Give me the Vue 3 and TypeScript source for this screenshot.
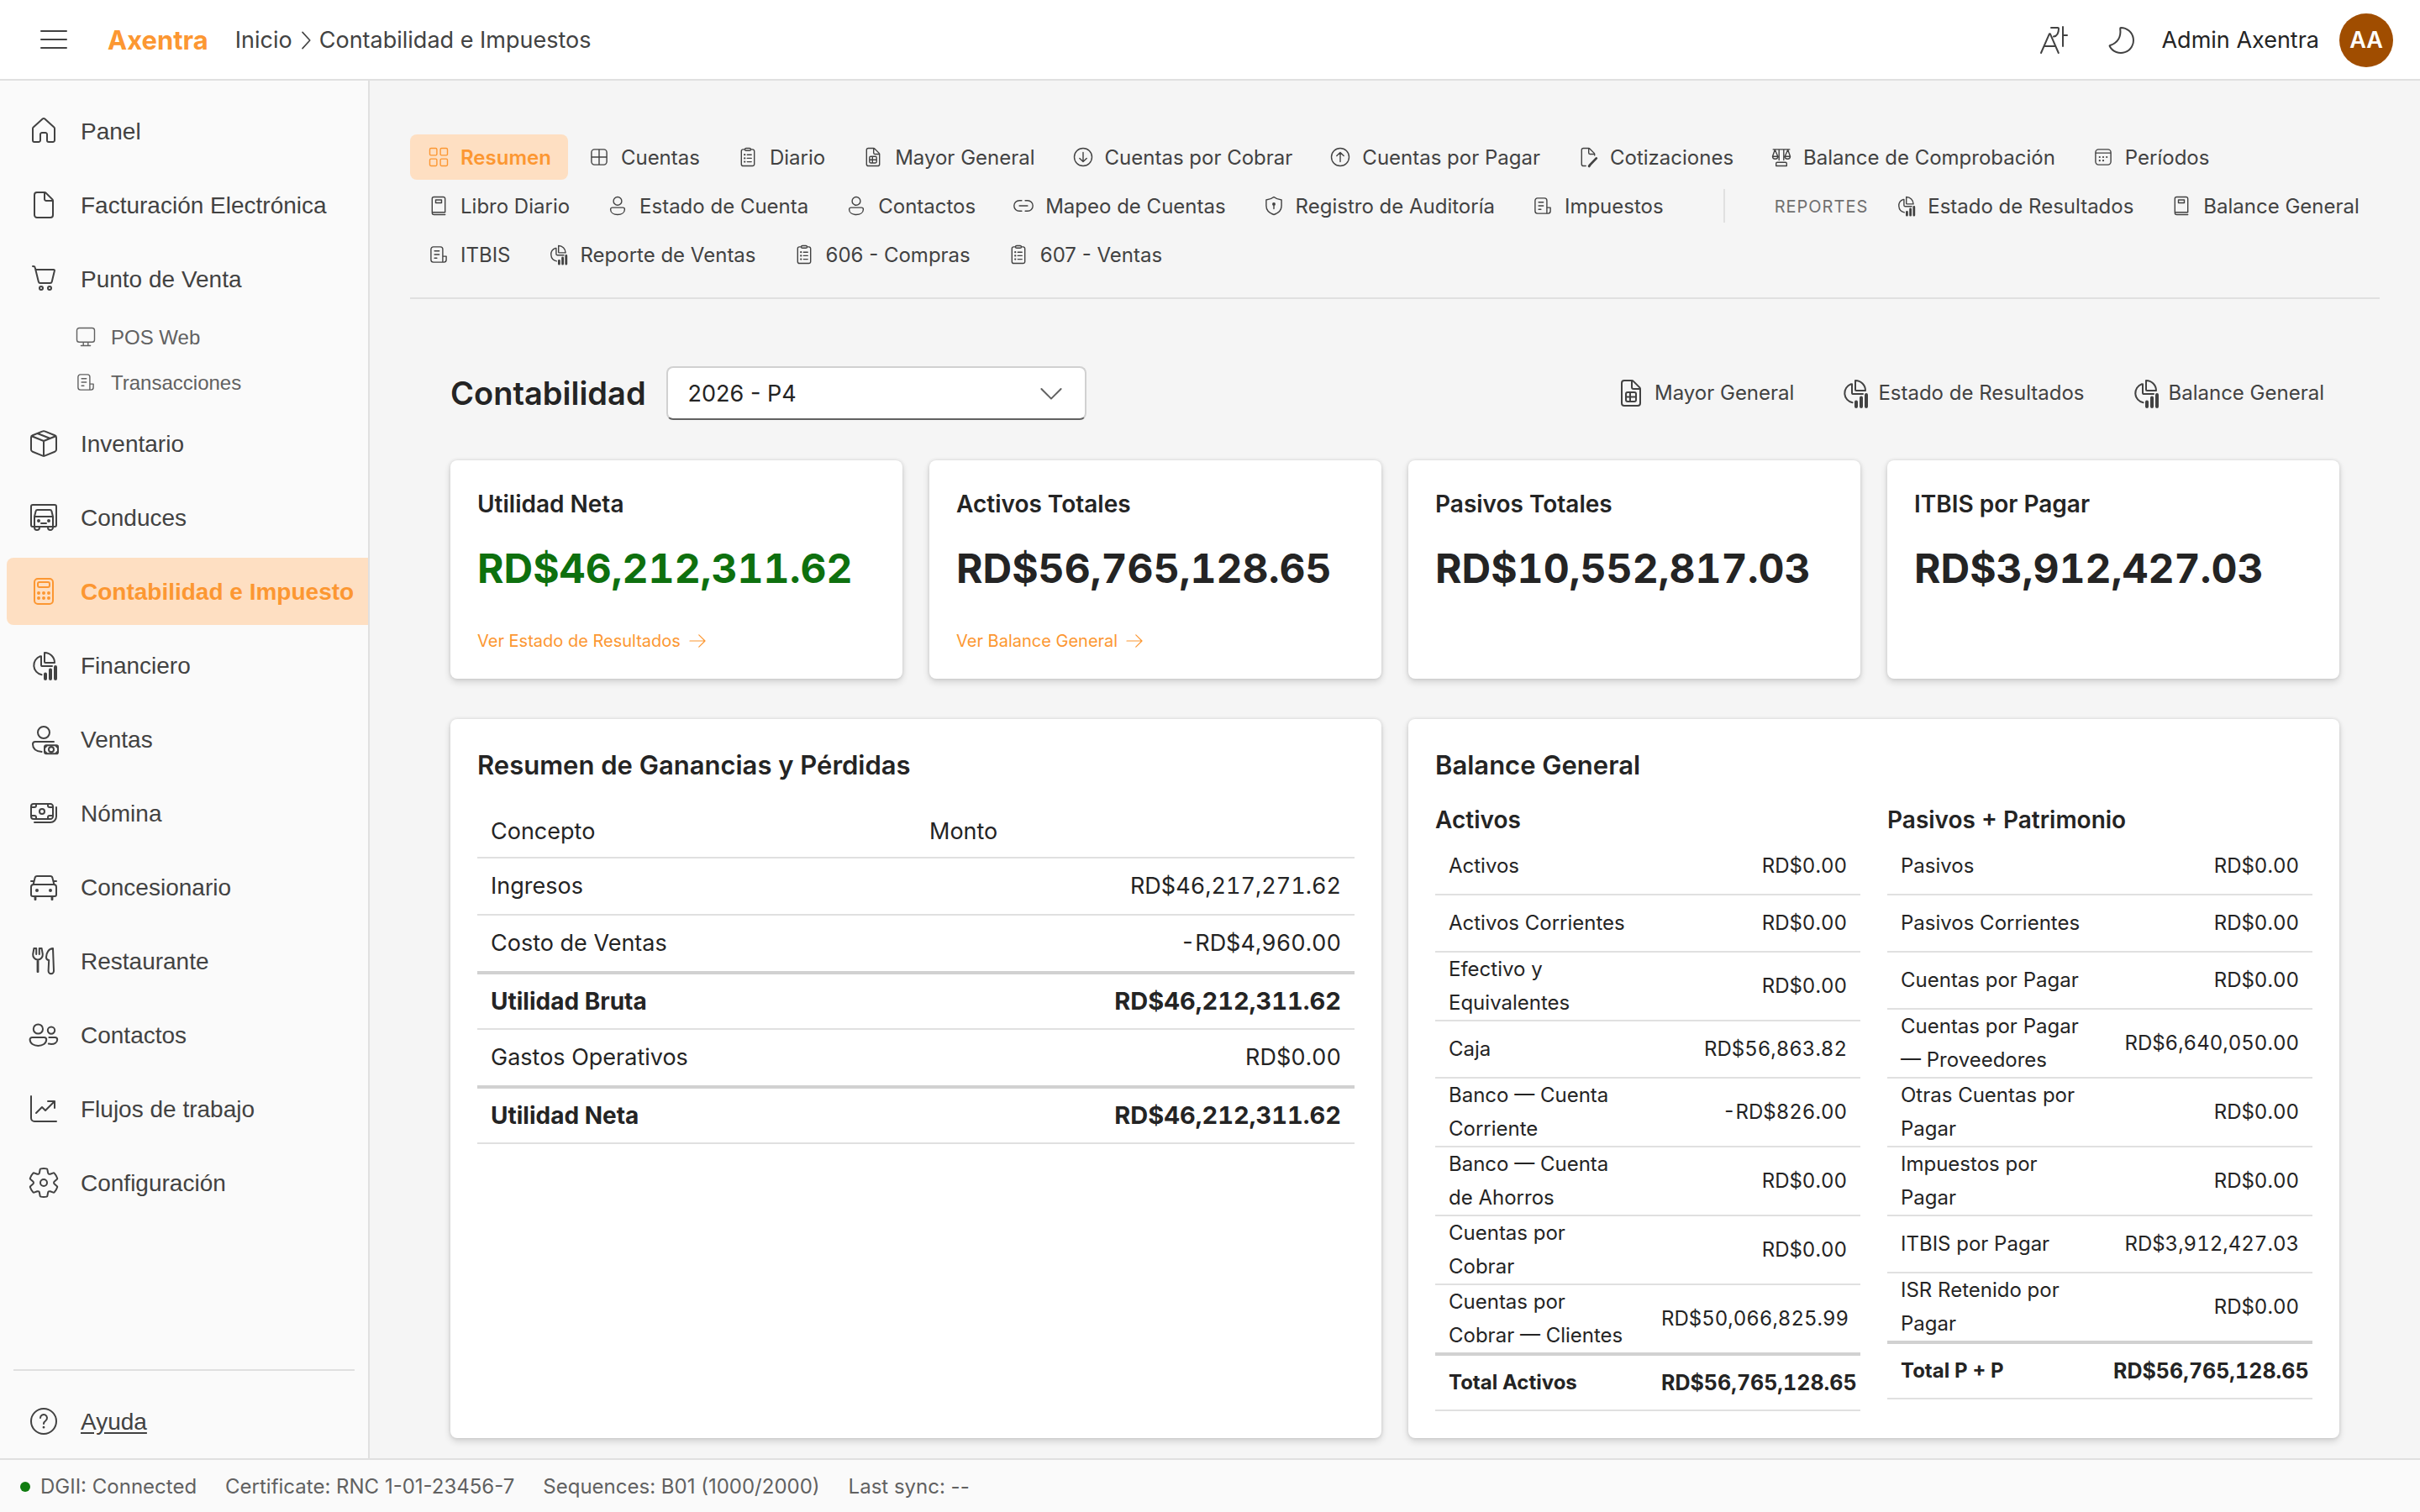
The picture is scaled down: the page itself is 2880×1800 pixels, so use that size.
<script setup lang="ts">
import { h, ref, type FunctionalComponent } from 'vue'

interface Glyph {
  line?: string
  fill?: string
  bold?: string
}
interface Item {
  label: string
  icon: string
  active?: boolean
}
interface NavItem extends Item {
  children?: Item[]
}
interface Row {
  label: string
  amount: string
  total?: boolean
}

const dot = (x: number, y: number, r: number): string =>
  `M${x - r} ${y}a${r} ${r} 0 1 0 ${2 * r} 0a${r} ${r} 0 1 0 ${-2 * r} 0z`

/* All glyphs sit on a 20 unit grid: `line` is stroked, `bold` is stroked twice as wide. */
const glyphs: Record<string, Glyph> = {
  menu: { line: 'M2.5 4.5h15M2.5 9.5h15M2.5 14.5h15' },
  home: {
    fill: 'M9 2.39a1.5 1.5 0 0 1 2 0l5.5 4.94c.32.28.5.69.5 1.12v7.05c0 .83-.67 1.5-1.5 1.5H13a1.5 1.5 0 0 1-1.5-1.5V12a.5.5 0 0 0-.5-.5H9a.5.5 0 0 0-.5.5v3.5c0 .83-.67 1.5-1.5 1.5H4.5A1.5 1.5 0 0 1 3 15.5V8.45c0-.43.18-.84.5-1.12L9 2.39Zm1.33.74a.5.5 0 0 0-.66 0l-5.5 4.94a.5.5 0 0 0-.17.38v7.05c0 .28.22.5.5.5H7a.5.5 0 0 0 .5-.5V12c0-.83.67-1.5 1.5-1.5h2c.83 0 1.5.67 1.5 1.5v3.5c0 .28.22.5.5.5h2.5a.5.5 0 0 0 .5-.5V8.45a.5.5 0 0 0-.17-.38l-5.5-4.94Z',
  },
  document: {
    fill: 'M6 2a2 2 0 0 0-2 2v12c0 1.1.9 2 2 2h8a2 2 0 0 0 2-2V7.41c0-.4-.16-.78-.44-1.06l-3.91-3.91A1.5 1.5 0 0 0 10.59 2H6ZM5 4a1 1 0 0 1 1-1h4v3.5c0 .83.67 1.5 1.5 1.5H15v8a1 1 0 0 1-1 1H6a1 1 0 0 1-1-1V4Zm9.8 3h-3.3a.5.5 0 0 1-.5-.5V3.2L14.8 7Z',
  },
  cart: {
    line: `M3.5 2.5h.4c.45 0 .85.3.95.75l2.1 8.5c.1.45.5.75.95.75h6c.45 0 .85-.3.95-.75l1.6-6.6a.5.5 0 0 0-.5-.65H5.2${dot(8.5, 15.5, 1)}${dot(13.5, 15.5, 1)}`,
  },
  desktop: {
    line: 'M4.5 2.5h11a2 2 0 0 1 2 2v8a2 2 0 0 1-2 2h-11a2 2 0 0 1-2-2v-8a2 2 0 0 1 2-2zM8 14.5v3M12 14.5v3M6 17.5h8',
  },
  receipt: {
    line: 'M5.5 3.5h6a2 2 0 0 1 2 2v11h-8a2 2 0 0 1-2-2v-9a2 2 0 0 1 2-2zM13.5 11.5h3v3a2 2 0 0 1-2 2h-1M6.5 7h4M6.5 10h4M6.5 13h2',
  },
  box: {
    line: 'M9.4 2.7a1.5 1.5 0 0 1 1.2 0l6 2.4c.5.2.9.7.9 1.3v7.2c0 .6-.4 1.1-.9 1.3l-6 2.4a1.5 1.5 0 0 1-1.2 0l-6-2.4a1.4 1.4 0 0 1-.9-1.3V6.4c0-.6.4-1.1.9-1.3zM2.9 5.6 10 8.5l7.1-2.9M10 8.5v9M6.3 4l7.3 2.9',
  },
  truck: {
    line: 'M4.5 15.5h-1a1 1 0 0 1-1-1v-11a1 1 0 0 1 1-1h13a1 1 0 0 1 1 1v11a1 1 0 0 1-1 1h-1M4.5 15.5v-6l.8-3.2a1 1 0 0 1 1-.8h7.4a1 1 0 0 1 1 .8l.8 3.2v6zM4.5 9.5h11M8.5 13.5h3M4.5 15.5v.5a1.5 1.5 0 0 0 3 0v-.5M12.5 15.5v.5a1.5 1.5 0 0 0 3 0v-.5',
    fill: dot(7, 12, 1) + dot(13, 12, 1),
  },
  calculator: {
    line: 'M6.5 2.5h7a2 2 0 0 1 2 2v11a2 2 0 0 1-2 2h-7a2 2 0 0 1-2-2v-11a2 2 0 0 1 2-2zM7.5 4.5h5a1 1 0 0 1 1 1v1a1 1 0 0 1-1 1h-5a1 1 0 0 1-1-1v-1a1 1 0 0 1 1-1z',
    fill: [7, 10, 13].map((x) => dot(x, 11, 1) + dot(x, 14, 1)).join(''),
  },
  pie: {
    line: 'M8 4.6A5.7 5.7 0 0 0 8.8 15.6M8.5 4.6v5.1c0 .5.3.8.8.8H15M10.5 2.5V8c0 .3.2.5.5.5h5.5a6 6 0 0 0-6-6z',
    bold: 'M11 15.2V18M14 12.8V18M17 11V18',
  },
  sales: {
    line: `${dot(10, 6, 3.5)}M16 11.5H5A1.5 1.5 0 0 0 3.5 13c0 2.7 2.2 4.2 5.3 4.5M11.4 13.6h6.2a.9.9 0 0 1 .9.9v3.2a.9.9 0 0 1-.9.9h-6.2a.9.9 0 0 1-.9-.9v-3.2a.9.9 0 0 1 .9-.9zM10.6 15.2l1.5-1.5M17 13.7l1.4 1.5M10.6 17.2l1.5 1.4M17 18.6l1.4-1.4${dot(14.5, 16.1, 1.5)}`,
  },
  money: {
    line: `M4 4.5h10A1.5 1.5 0 0 1 15.5 6v6a1.5 1.5 0 0 1-1.5 1.5H4A1.5 1.5 0 0 1 2.5 12V6A1.5 1.5 0 0 1 4 4.5zM5.5 4.5v1a1 1 0 0 1-1 1h-2M12.5 4.5v1a1 1 0 0 0 1 1h2M2.5 11.5h2a1 1 0 0 1 1 1v1M15.5 11.5h-2a1 1 0 0 0-1 1v1M17.5 6.5V12a3.5 3.5 0 0 1-3.5 3.5H4.500${dot(9, 9, 1.5)}`,
  },
  car: {
    line: 'M4 8.5h12a1.5 1.5 0 0 1 1.5 1.5v4.5a1 1 0 0 1-1 1h-13a1 1 0 0 1-1-1V10A1.5 1.5 0 0 1 4 8.5zM3.8 8.5l1-4a1.3 1.3 0 0 1 1.3-1h7.8a1.3 1.3 0 0 1 1.3 1l1 4M2.5 6.5h1.6M15.9 6.5h1.6M4.8 15.5v2h.4v-2M14.8 15.5v2h.4v-2',
    fill: dot(6, 12, 1) + dot(14, 12, 1),
  },
  food: {
    line: 'M4.2 2.5 3.6 6a2.9 2.9 0 0 0 2.9 3.2A2.9 2.9 0 0 0 9.4 6l-.6-3.5M5.6 2.5V6M7.4 2.5V6M4.2 2.5h1.4M7.4 2.5h1.4M6.3 9.2v7.3h.4V9.2M15.5 2.5c-2.4 0-4 2.7-4 5.3 0 1 .5 1.7 1.6 1.7l-.3 6.5a1.6 1.6 0 0 0 3.2 0z',
  },
  people: {
    line: `${dot(6.7, 6.5, 2.8)}${dot(14.5, 7.3, 2.1)}M3.1 11.5h7.2a1.3 1.3 0 0 1 1.3 1.3c0 2.3-2.2 3.7-4.9 3.7s-4.9-1.4-4.9-3.7a1.3 1.3 0 0 1 1.3-1.3zM13.2 11.5h3.6a1.3 1.3 0 0 1 1.3 1.3c0 1.8-1.7 2.7-3.6 2.7-.6 0-1.1-.1-1.6-.2`,
  },
  trend: { line: 'M2.5 2.5v13a2 2 0 0 0 2 2h13M5.5 12.5 9 9l2 2 5.5-5.5M12.5 5.5h4v4' },
  settings: {
    line: `M1.91 7.38A8.5 8.5 0 0 1 3.7 4.3a.5.5 0 0 1 .54-.13l1.92.68a1 1 0 0 0 1.32-.76l.36-2a.5.5 0 0 1 .4-.4 8.53 8.53 0 0 1 3.55 0c.2.04.35.2.38.4l.37 2a1 1 0 0 0 1.32.76l1.92-.68a.5.5 0 0 1 .54.13 8.5 8.5 0 0 1 1.78 3.08c.06.2 0 .4-.15.54l-1.56 1.32a1 1 0 0 0 0 1.52l1.56 1.32a.5.5 0 0 1 .15.54 8.5 8.5 0 0 1-1.78 3.08.5.5 0 0 1-.54.13l-1.92-.68a1 1 0 0 0-1.32.76l-.37 2a.5.5 0 0 1-.38.4 8.53 8.53 0 0 1-3.56 0 .5.5 0 0 1-.39-.4l-.36-2a1 1 0 0 0-1.32-.76l-1.92.68a.5.5 0 0 1-.54-.13 8.5 8.5 0 0 1-1.78-3.08.5.5 0 0 1 .15-.54l1.56-1.32a1 1 0 0 0 0-1.52L2.06 7.92a.5.5 0 0 1-.15-.54Z${dot(10, 10, 2)}`,
  },
  help: {
    line: `${dot(10, 10, 7.5)}M8 8a2 2 0 1 1 3.2 1.6c-.7.5-1.2 1-1.2 1.9`,
    fill: dot(10, 13.6, 0.7),
  },
  translate: {
    line: 'M2.5 17.5 7.5 6.1h.4l5 11.4M4.300 13.5h6.800M8.5 2.500h4c.3 0 .5.2.5.5 0 2.500-1 4.500-3 4.800M15.500 2v11.500M15.500 7h2.500',
  },
  moon: { line: 'M10 2.5a7.500 7.500 0 1 1-6.600 11.100c-.2-.3-.1-.5.2-.6C8 11.500 10.300 8.500 9.600 3c0-.3.1-.5.4-.5z' },
  chevronRight: { line: 'M7.5 4l5.5 6-5.5 6' },
  chevronDown: { line: 'M4.200 7.500l5.800 5.800 5.800-5.800' },
  arrowRight: { line: 'M2.500 10h15M11.500 4l6 6-6 6' },
  grid: {
    line: [2.5, 11.5].map((x) => [2.5, 11.5].map((y) => `M${x + 1} ${y}h4a1 1 0 0 1 1 1v4a1 1 0 0 1-1 1h-4a1 1 0 0 1-1-1v-4a1 1 0 0 1 1-1z`).join('')).join(''),
  },
  table: { line: 'M6 3.5h8A2.5 2.5 0 0 1 16.5 6v8a2.5 2.5 0 0 1-2.5 2.5H6A2.5 2.5 0 0 1 3.5 14V6A2.5 2.5 0 0 1 6 3.5zM10 3.5v13M3.5 10h13' },
  clipboard: {
    line: 'M7.5 3.5H6A1.5 1.5 0 0 0 4.5 5v11A1.5 1.5 0 0 0 6 17.5h8a1.5 1.5 0 0 0 1.5-1.5V5A1.5 1.5 0 0 0 14 3.5h-1.5M8.5 2.5h3a1 1 0 0 1 0 2h-3a1 1 0 0 1 0-2zM9.5 8H13M9.5 11H13M9.5 14H13',
    fill: dot(7.3, 8, 0.8) + dot(7.3, 11, 0.8) + dot(7.3, 14, 0.8),
  },
  docTable: {
    line: 'M6 2.5h4.6c.3 0 .5.1.7.3l3.9 3.9c.2.2.3.4.3.7V16a1.5 1.5 0 0 1-1.5 1.5H6A1.5 1.5 0 0 1 4.5 16V4A1.5 1.5 0 0 1 6 2.5zM10.5 2.5v4a1 1 0 0 0 1 1h4M8 9.5h4a1 1 0 0 1 1 1V14a1 1 0 0 1-1 1H8a1 1 0 0 1-1-1v-3.5a1 1 0 0 1 1-1zM7 12.3h6M9.5 9.5V15',
  },
  down: { line: `${dot(10, 10, 7.5)}M10 6v8M7 11l3 3 3-3` },
  up: { line: `${dot(10, 10, 7.5)}M10 14V6M7 9l3-3 3 3` },
  quote: {
    line: 'M8 17.5H6A1.5 1.5 0 0 1 4.5 16V4A1.5 1.5 0 0 1 6 2.5h4.6c.3 0 .5.1.7.3l3.9 3.9c.2.2.3.4.3.7v1.1M10.5 2.5v4a1 1 0 0 0 1 1h4',
    bold: 'M17 11l-5.3 5.5-.9 1.3',
  },
  scales: {
    line: 'M3 3.5h14M8 3.5v9M12 3.5v9M4.5 3.8l-2 5.7c0 2.8 4.5 2.8 4.5 0zM15.500 3.8l-2.500 5.7c0 2.8 4.5 2.8 4.5 0zM6.5 14.5h7a1 1 0 0 1 1 1v2h-9v-2a1 1 0 0 1 1-1zM2.5 9.5H7M13 9.5h4.5',
  },
  calendar: {
    line: 'M6 3.5h8A2.5 2.5 0 0 1 16.5 6v8a2.5 2.5 0 0 1-2.5 2.5H6A2.5 2.5 0 0 1 3.5 14V6A2.5 2.5 0 0 1 6 3.5zM3.5 6.5h13',
    fill: [7, 10, 13].map((x) => dot(x, 10, 0.8) + (x < 13 ? dot(x, 13, 0.8) : '')).join(''),
  },
  book: {
    line: 'M15.5 15.5h-11M15.5 17.5H6A1.5 1.5 0 0 1 4.5 16V4A1.5 1.5 0 0 1 6 2.5h8A1.5 1.5 0 0 1 15.5 4v11.5M7.5 5h5v2.5h-5z',
  },
  person: {
    line: `${dot(10, 6, 3.5)}M5.5 11.5h9A1.5 1.5 0 0 1 16 13c0 2.7-2.5 4.5-6 4.5S4 15.7 4 13a1.5 1.5 0 0 1 1.5-1.5z`,
  },
  link: { line: 'M8.5 5.5h-2a4.5 4.5 0 0 0 0 9h2M11.5 5.5h2a4.5 4.5 0 0 1 0 9h-2M6.5 10h7' },
  shield: {
    line: 'M10 2.5c1.8 1.5 3.9 2.2 6.5 2.5v5c0 3.7-2.2 6.1-6.5 7.5-4.3-1.4-6.5-3.8-6.5-7.5V5C6.1 4.7 8.2 4 10 2.5zM10 9v3.5',
    fill: dot(10, 8.5, 1.4),
  },
}

const Icon: FunctionalComponent<{ name: string }> = (props) => {
  const g = glyphs[props.name]
  return h('svg', { class: 'icon', viewBox: '0 0 20 20', 'aria-hidden': 'true' }, [
    g.fill ? h('path', { d: g.fill, fill: 'currentColor' }) : null,
    g.line ? h('path', { d: g.line, fill: 'none', stroke: 'currentColor', 'stroke-width': 1, 'stroke-linecap': 'round', 'stroke-linejoin': 'round' }) : null,
    g.bold ? h('path', { d: g.bold, fill: 'none', stroke: 'currentColor', 'stroke-width': 2, 'stroke-linecap': 'round', 'stroke-linejoin': 'round' }) : null,
  ])
}
Icon.props = ['name']

const navigation: NavItem[] = [
  { label: 'Panel', icon: 'home' },
  { label: 'Facturación Electrónica', icon: 'document' },
  {
    label: 'Punto de Venta',
    icon: 'cart',
    children: [
      { label: 'POS Web', icon: 'desktop' },
      { label: 'Transacciones', icon: 'receipt' },
    ],
  },
  { label: 'Inventario', icon: 'box' },
  { label: 'Conduces', icon: 'truck' },
  { label: 'Contabilidad e Impuesto', icon: 'calculator', active: true },
  { label: 'Financiero', icon: 'pie' },
  { label: 'Ventas', icon: 'sales' },
  { label: 'Nómina', icon: 'money' },
  { label: 'Concesionario', icon: 'car' },
  { label: 'Restaurante', icon: 'food' },
  { label: 'Contactos', icon: 'people' },
  { label: 'Flujos de trabajo', icon: 'trend' },
  { label: 'Configuración', icon: 'settings' },
]

const tabRows: { tabs: Item[]; reports?: Item[] }[] = [
  {
    tabs: [
      { label: 'Resumen', icon: 'grid', active: true },
      { label: 'Cuentas', icon: 'table' },
      { label: 'Diario', icon: 'clipboard' },
      { label: 'Mayor General', icon: 'docTable' },
      { label: 'Cuentas por Cobrar', icon: 'down' },
      { label: 'Cuentas por Pagar', icon: 'up' },
      { label: 'Cotizaciones', icon: 'quote' },
      { label: 'Balance de Comprobación', icon: 'scales' },
      { label: 'Períodos', icon: 'calendar' },
    ],
  },
  {
    tabs: [
      { label: 'Libro Diario', icon: 'book' },
      { label: 'Estado de Cuenta', icon: 'person' },
      { label: 'Contactos', icon: 'person' },
      { label: 'Mapeo de Cuentas', icon: 'link' },
      { label: 'Registro de Auditoría', icon: 'shield' },
      { label: 'Impuestos', icon: 'receipt' },
    ],
    reports: [
      { label: 'Estado de Resultados', icon: 'pie' },
      { label: 'Balance General', icon: 'book' },
    ],
  },
  {
    tabs: [
      { label: 'ITBIS', icon: 'receipt' },
      { label: 'Reporte de Ventas', icon: 'pie' },
      { label: '606 - Compras', icon: 'clipboard' },
      { label: '607 - Ventas', icon: 'clipboard' },
    ],
  },
]

const shortcuts: Item[] = [
  { label: 'Mayor General', icon: 'docTable' },
  { label: 'Estado de Resultados', icon: 'pie' },
  { label: 'Balance General', icon: 'pie' },
]

const period = ref('2026 - P4')

const metrics = [
  { title: 'Utilidad Neta', value: 'RD$46,212,311.62', positive: true, link: 'Ver Estado de Resultados' },
  { title: 'Activos Totales', value: 'RD$56,765,128.65', link: 'Ver Balance General' },
  { title: 'Pasivos Totales', value: 'RD$10,552,817.03' },
  { title: 'ITBIS por Pagar', value: 'RD$3,912,427.03' },
]

const profitRows: Row[] = [
  { label: 'Ingresos', amount: 'RD$46,217,271.62' },
  { label: 'Costo de Ventas', amount: '-RD$4,960.00' },
  { label: 'Utilidad Bruta', amount: 'RD$46,212,311.62', total: true },
  { label: 'Gastos Operativos', amount: 'RD$0.00' },
  { label: 'Utilidad Neta', amount: 'RD$46,212,311.62', total: true },
]

const balance: { title: string; rows: Row[] }[] = [
  {
    title: 'Activos',
    rows: [
      { label: 'Activos', amount: 'RD$0.00' },
      { label: 'Activos Corrientes', amount: 'RD$0.00' },
      { label: 'Efectivo y Equivalentes', amount: 'RD$0.00' },
      { label: 'Caja', amount: 'RD$56,863.82' },
      { label: 'Banco — Cuenta Corriente', amount: '-RD$826.00' },
      { label: 'Banco — Cuenta de Ahorros', amount: 'RD$0.00' },
      { label: 'Cuentas por Cobrar', amount: 'RD$0.00' },
      { label: 'Cuentas por Cobrar — Clientes', amount: 'RD$50,066,825.99' },
      { label: 'Total Activos', amount: 'RD$56,765,128.65', total: true },
    ],
  },
  {
    title: 'Pasivos + Patrimonio',
    rows: [
      { label: 'Pasivos', amount: 'RD$0.00' },
      { label: 'Pasivos Corrientes', amount: 'RD$0.00' },
      { label: 'Cuentas por Pagar', amount: 'RD$0.00' },
      { label: 'Cuentas por Pagar — Proveedores', amount: 'RD$6,640,050.00' },
      { label: 'Otras Cuentas por Pagar', amount: 'RD$0.00' },
      { label: 'Impuestos por Pagar', amount: 'RD$0.00' },
      { label: 'ITBIS por Pagar', amount: 'RD$3,912,427.03' },
      { label: 'ISR Retenido por Pagar', amount: 'RD$0.00' },
      { label: 'Total P + P', amount: 'RD$56,765,128.65', total: true },
    ],
  },
]

const status = ['Certificate: RNC 1-01-23456-7', 'Sequences: B01 (1000/2000)', 'Last sync: --']
</script>

<template>
  <div class="app">
    <header class="topbar">
      <button class="icon-button" type="button" aria-label="Menú"><Icon name="menu" /></button>
      <a class="brand" href="#">Axentra</a>
      <nav class="crumbs" aria-label="Ruta">
        <a href="#">Inicio</a>
        <Icon name="chevronRight" />
        <span>Contabilidad e Impuestos</span>
      </nav>
      <div class="account">
        <button class="icon-button" type="button" aria-label="Idioma"><Icon name="translate" /></button>
        <button class="icon-button" type="button" aria-label="Tema"><Icon name="moon" /></button>
        <span class="user">Admin Axentra</span>
        <span class="avatar">AA</span>
      </div>
    </header>

    <div class="body">
      <aside class="sidebar">
        <nav class="menu" aria-label="Principal">
          <template v-for="item in navigation" :key="item.label">
            <button class="menu-item" :class="{ active: item.active }" type="button">
              <Icon :name="item.icon" />
              <span>{{ item.label }}</span>
            </button>
            <div v-if="item.children" class="submenu">
              <button v-for="child in item.children" :key="child.label" class="submenu-item" type="button">
                <Icon :name="child.icon" />
                <span>{{ child.label }}</span>
              </button>
            </div>
          </template>
        </nav>
        <div class="sidebar-foot">
          <a class="menu-item help" href="#">
            <Icon name="help" />
            <span>Ayuda</span>
          </a>
        </div>
      </aside>

      <main class="main">
        <nav class="tabs" aria-label="Contabilidad">
          <div v-for="(row, index) in tabRows" :key="index" class="tab-row">
            <button v-for="tab in row.tabs" :key="tab.label" class="tab" :class="{ active: tab.active }" type="button">
              <Icon :name="tab.icon" />
              <span>{{ tab.label }}</span>
            </button>
            <template v-if="row.reports">
              <span class="tab-divider"></span>
              <span class="tab-heading">REPORTES</span>
              <button v-for="tab in row.reports" :key="tab.label" class="tab" type="button">
                <Icon :name="tab.icon" />
                <span>{{ tab.label }}</span>
              </button>
            </template>
          </div>
        </nav>

        <div class="page">
          <div class="page-head">
            <h1>Contabilidad</h1>
            <div class="period">
              <select v-model="period" aria-label="Período">
                <option>2026 - P4</option>
              </select>
              <Icon name="chevronDown" />
            </div>
            <div class="shortcuts">
              <button v-for="item in shortcuts" :key="item.label" type="button">
                <Icon :name="item.icon" />
                <span>{{ item.label }}</span>
              </button>
            </div>
          </div>

          <section class="metrics">
            <article v-for="metric in metrics" :key="metric.title" class="card metric">
              <h2>{{ metric.title }}</h2>
              <p class="value" :class="{ positive: metric.positive }">{{ metric.value }}</p>
              <a v-if="metric.link" href="#">{{ metric.link }}<Icon name="arrowRight" /></a>
            </article>
          </section>

          <section class="panels">
            <article class="card panel">
              <h2>Resumen de Ganancias y Pérdidas</h2>
              <table class="profit">
                <thead>
                  <tr>
                    <th scope="col">Concepto</th>
                    <th scope="col">Monto</th>
                  </tr>
                </thead>
                <tbody>
                  <tr v-for="row in profitRows" :key="row.label" :class="{ total: row.total }">
                    <td>{{ row.label }}</td>
                    <td class="amount">{{ row.amount }}</td>
                  </tr>
                </tbody>
              </table>
            </article>

            <article class="card panel">
              <h2>Balance General</h2>
              <div class="balance">
                <div v-for="side in balance" :key="side.title">
                  <h3>{{ side.title }}</h3>
                  <table>
                    <tbody>
                      <tr v-for="row in side.rows" :key="row.label" :class="{ total: row.total }">
                        <td>{{ row.label }}</td>
                        <td class="amount">{{ row.amount }}</td>
                      </tr>
                    </tbody>
                  </table>
                </div>
              </div>
            </article>
          </section>
        </div>
      </main>
    </div>

    <footer class="statusbar">
      <span class="online"><i></i>DGII: Connected</span>
      <span v-for="text in status" :key="text">{{ text }}</span>
    </footer>
  </div>
</template>

<style>
body {
  margin: 0;
  background: #f5f5f5;
}
</style>

<style scoped>
.app {
  display: flex;
  flex-direction: column;
  min-height: 100vh;
  color: #242424;
  font-family: Inter, 'Noto Sans', sans-serif;
  font-size: 24px;
  line-height: 40px;
}
.app *,
.app :deep(*) {
  box-sizing: border-box;
}
h1,
h2,
h3,
p {
  margin: 0;
}
button {
  border: 0;
  padding: 0;
  background: none;
  color: inherit;
  font: inherit;
  white-space: nowrap;
}
a {
  color: inherit;
  text-decoration: none;
}
:deep(.icon) {
  display: block;
  flex: none;
  width: 40px;
  height: 40px;
}

.topbar {
  display: flex;
  align-items: center;
  height: 96px;
  padding: 0 32px 0 44px;
  background: #fff;
  box-shadow: inset 0 -2px #e0e0e0;
  color: #424242;
}
.brand {
  margin-left: 44px;
  color: #fc9732;
  font-size: 31px;
  font-weight: 700;
}
.crumbs {
  display: flex;
  align-items: center;
  margin-left: 32px;
  font-size: 27px;
}
.crumbs :deep(.icon) {
  width: 32px;
  height: 32px;
}
.account {
  display: flex;
  align-items: center;
  margin-left: auto;
}
.account .icon-button {
  margin-right: 40px;
}
.account .icon-button + .icon-button {
  margin-right: 28px;
}
.user {
  color: #242424;
  font-size: 27px;
}
.avatar {
  width: 64px;
  height: 64px;
  margin-left: 24px;
  border-radius: 50%;
  background: #a04d00;
  color: #fff;
  font-size: 27px;
  font-weight: 600;
  line-height: 64px;
  text-align: center;
}

.body {
  display: flex;
  flex: 1;
}
.sidebar {
  display: flex;
  flex: none;
  flex-direction: column;
  width: 440px;
  border-right: 2px solid #e0e0e0;
  background: #fafafa;
  color: #424242;
  font-family: 'Liberation Sans', Arial, sans-serif;
}
.menu {
  display: flex;
  flex-direction: column;
  gap: 8px;
  padding: 20px 0 0 8px;
}
.menu-item {
  display: flex;
  align-items: center;
  gap: 24px;
  height: 80px;
  padding-left: 24px;
  border-radius: 8px 0 0 8px;
  font-size: 28px;
}
.menu-item span,
.submenu-item span,
.tab span {
  padding-top: 2px;
}
.menu-item.active {
  background: #fedfc2;
  color: #fc9732;
  font-weight: 700;
}
.submenu {
  display: flex;
  flex-direction: column;
  gap: 12px;
  padding: 0 0 4px 80px;
}
.submenu-item {
  display: flex;
  align-items: center;
  gap: 16px;
  height: 42px;
  color: #616161;
  font-size: 24px;
}
.submenu-item :deep(.icon),
.tab :deep(.icon) {
  width: 28px;
  height: 28px;
}
.sidebar-foot {
  margin: auto 16px 0;
  padding: 20px 0 4px;
  border-top: 2px solid #e0e0e0;
}
.help {
  padding-left: 16px;
}
.help span {
  text-decoration: underline;
  text-underline-offset: 3px;
}

.main {
  flex: 1;
  min-width: 0;
  padding: 64px 48px 24px;
}
.tabs {
  display: flex;
  flex-direction: column;
  gap: 4px;
  padding-bottom: 24px;
  border-bottom: 2px solid #e0e0e0;
  color: #424242;
}
.tab-row {
  display: flex;
  align-items: center;
  gap: 3px;
}
.tab {
  display: flex;
  align-items: center;
  gap: 12px;
  height: 54px;
  padding: 0 20px;
  border-radius: 8px;
}
.tab.active {
  background: #fedfc2;
  color: #fc9732;
  font-weight: 600;
}
.tab-divider {
  flex: none;
  width: 2px;
  height: 40px;
  margin: 0 48px;
  background: #e0e0e0;
}
.tab-heading {
  padding: 2px 8px 0;
  color: #707070;
  font-size: 20px;
  letter-spacing: 1px;
}

.page {
  padding: 80px 48px 0;
}
.page-head {
  display: flex;
  align-items: center;
  margin-bottom: 48px;
}
.page-head h1 {
  font-size: 38px;
  font-weight: 600;
}
.period {
  position: relative;
  width: 500px;
  margin-left: 24px;
}
.period select {
  display: block;
  width: 100%;
  height: 64px;
  padding: 0 24px;
  border: 2px solid #d1d1d1;
  border-bottom-color: #616161;
  border-radius: 8px;
  background: #fff;
  color: #242424;
  font-family: inherit;
  font-size: 27px;
  appearance: none;
}
.period :deep(.icon) {
  position: absolute;
  top: 12px;
  right: 22px;
  color: #616161;
  pointer-events: none;
}
.shortcuts {
  display: flex;
  gap: 16px;
  margin-left: auto;
  color: #424242;
}
.shortcuts button {
  display: flex;
  align-items: center;
  gap: 8px;
  padding: 0 18px;
}

.card {
  padding: 32px;
  border-radius: 8px;
  background: #fff;
  box-shadow: 0 0 4px rgba(0, 0, 0, 0.12), 0 4px 8px rgba(0, 0, 0, 0.14);
}
.metrics {
  display: grid;
  grid-template-columns: repeat(4, 1fr);
  gap: 32px;
}
.metric {
  min-height: 260px;
}
.metric h2 {
  font-size: 28px;
  font-weight: 600;
}
.value {
  margin: 24px 0 40px;
  font-size: 48px;
  font-weight: 700;
  font-variant-numeric: tabular-nums;
  line-height: 66px;
  white-space: nowrap;
}
.value.positive {
  color: #0e700e;
}
.metric a {
  display: flex;
  align-items: center;
  gap: 8px;
  color: #fc9732;
  font-size: 20px;
  line-height: 26px;
}
.metric a :deep(.icon) {
  width: 24px;
  height: 24px;
}
.panels {
  display: grid;
  grid-template-columns: repeat(2, 1fr);
  gap: 32px;
  margin-top: 48px;
}
.panel h2 {
  margin-bottom: 20px;
  font-size: 31px;
  font-weight: 600;
  line-height: 46px;
}
.panel h3 {
  font-size: 28px;
  font-weight: 600;
  line-height: 44px;
}
table {
  width: 100%;
  border-spacing: 0;
  table-layout: fixed;
}
th,
td {
  height: 68px;
  padding: 0 16px;
  border-bottom: 2px solid #e0e0e0;
  font-weight: 400;
  text-align: left;
}
th {
  padding-top: 6px;
}
tr:has(+ .total) td {
  height: 66px;
  border-bottom: 0;
}
.total td {
  height: 70px;
  border-top: 4px solid #d1d1d1;
  font-weight: 700;
}
td.amount {
  font-variant-numeric: tabular-nums;
  text-align: right;
  white-space: nowrap;
}
.profit {
  font-size: 27px;
}
.profit .total {
  font-size: 28px;
}
.profit .total .amount {
  font-size: 29px;
}
.balance {
  display: grid;
  grid-template-columns: repeat(2, 1fr);
  gap: 32px;
}
.balance .total .amount {
  font-size: 25px;
}

.statusbar {
  display: flex;
  align-items: center;
  gap: 34px;
  height: 64px;
  padding: 4px 24px 0;
  background: #fafafa;
  box-shadow: inset 0 2px #e0e0e0;
  color: #616161;
}
.online {
  display: flex;
  align-items: center;
  gap: 12px;
}
.online i {
  width: 12px;
  height: 12px;
  border-radius: 50%;
  background: #107c10;
}
</style>
